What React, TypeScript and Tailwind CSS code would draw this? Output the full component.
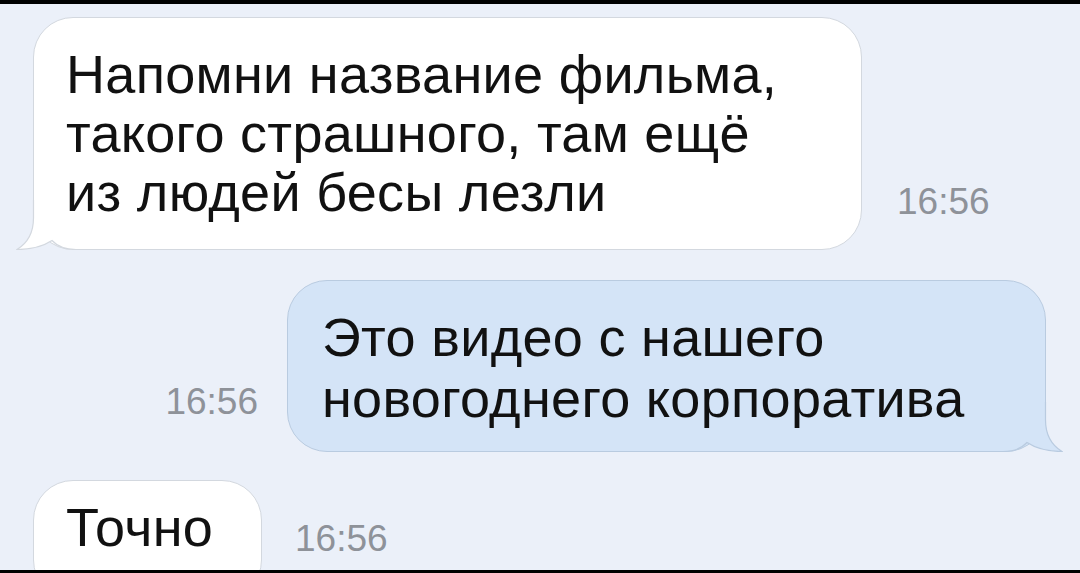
const textFont = { fontFamily: '"Liberation Sans", Arial, sans-serif' };

function Tail({ fill, stroke }: { fill: string; stroke: string }) {
  return (
    <svg width="70" height="50" viewBox="0 0 70 50" className="block">
      <path
        d="M17.5,0 L17.5,18 C17.5,34 10,44 1,49.5 C12,49.5 26,47 36,40.5 C42,47 50,49.5 60,49.5 L70,49.5 L70,0 Z"
        fill={fill}
      />
      <path
        d="M17.5,0 L17.5,18 C17.5,34 10,44 1,49.5 C12,49.5 26,47 36,40.5 C42,47 50,49.5 60,49.5 L70,49.5"
        fill="none"
        stroke={stroke}
        strokeWidth="1.2"
      />
    </svg>
  );
}

function Time() {
  return (
    <span className="text-[37px] leading-none text-[#8e9299]" style={textFont}>
      16:56
    </span>
  );
}

export default function App() {
  return (
    <div className="w-[1080px] h-[573px] bg-black pt-[4px] pb-[3px] flex flex-col" style={textFont}>
      <div className="flex-1 overflow-hidden bg-[#ebf0f9] pt-[13px] flex flex-col">
        {/* incoming */}
        <div className="flex items-end pl-[33px]">
          <div className="relative w-[829px] rounded-[40px] border border-[#d3d8df] bg-white pl-[32px] pt-[27px] pb-[27px] text-[54px] tracking-[0.3px] leading-[59px] text-[#111]">
            <div className="absolute left-[-18px] bottom-[-1px]">
              <Tail fill="#ffffff" stroke="#d3d8df" />
            </div>
            <p className="relative">
              Напомни название фильма,
              <br />
              такого страшного, там ещё
              <br />
              из людей бесы лезли
            </p>
          </div>
          <div className="ml-[35px] mb-[29px]">
            <Time />
          </div>
        </div>

        {/* outgoing */}
        <div className="flex items-end justify-end pr-[34px] mt-[30px]">
          <div className="mr-[29px] mb-[31px]">
            <Time />
          </div>
          <div className="relative w-[759px] rounded-[40px] border border-[#b9cbe0] bg-[#d4e4f7] pl-[34px] pt-[26px] pb-[22px] text-[54px] tracking-[0.3px] leading-[61px] text-[#111]">
            <div className="absolute right-[-18px] bottom-[-1px] scale-x-[-1]">
              <Tail fill="#d4e4f7" stroke="#b9cbe0" />
            </div>
            <p className="relative">
              Это видео с нашего
              <br />
              новогоднего корпоратива
            </p>
          </div>
        </div>

        {/* incoming */}
        <div className="flex items-start pl-[33px] mt-[28px]">
          <div className="relative w-[229px] h-[120px] rounded-[40px] border border-[#d3d8df] bg-white pl-[32px] pt-[17px] text-[54px] tracking-[0.3px] leading-[59px] text-[#111]">
            <p className="relative">Точно</p>
          </div>
          <div className="ml-[33px] mt-[40px]">
            <Time />
          </div>
        </div>
      </div>
    </div>
  );
}
